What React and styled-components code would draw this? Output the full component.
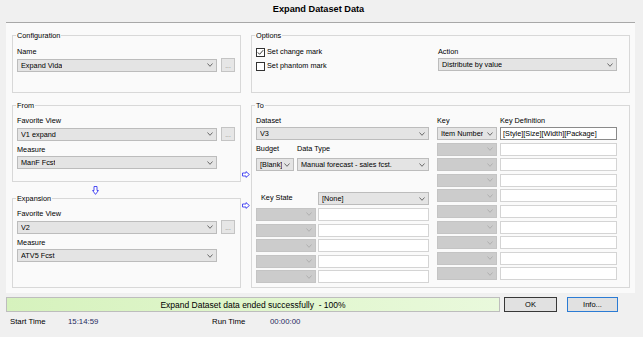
import React from 'react';
import styled, { createGlobalStyle } from 'styled-components';

const GlobalStyle = createGlobalStyle`
  html, body { margin: 0; padding: 0; background: #f0f0f0; }
  body { font-family: "Liberation Sans", Arial, sans-serif; color: #000; }
  * { box-sizing: border-box; }
`;

const Window = styled.div`
  width: 643px;
  height: 337px;
  background: #f0f0f0;
  overflow: hidden;
  font-size: 7.3px;
`;

const TitleBar = styled.div`
  height: 22px;
  padding: 0 6px 4px 0;
  display: flex;
  align-items: center;
  justify-content: center;
  font-weight: bold;
  font-size: 9.2px;
`;

const Panel = styled.div`
  margin-left: 6px;
  width: 629px;
  height: 271px;
  border-top: 1px solid #a8a8a8;
  background: #fafafa;
  padding: 12px 5px 0 6px;
  display: flex;
  flex-direction: column;
  gap: 12px;
`;

const Row = styled.div`
  display: grid;
  grid-template-columns: 229px 10px 379px;
  align-items: start;
`;

const Group = styled.div`
  position: relative;
  border: 1px solid #d8d8d8;
  height: ${p => p.$h}px;
  padding: ${p => p.$pt}px 4px 0 4px;
`;

const Legend = styled.span`
  position: absolute;
  top: -5px;
  left: 3px;
  padding: 0 1px;
  background: #fafafa;
  line-height: 9px;
  white-space: nowrap;
`;

const Label = styled.div`
  height: 9px;
  line-height: 9px;
  white-space: nowrap;
  margin-bottom: 2px;
  padding-left: ${p => p.$pl || 0}px;
`;

const Stack = styled.div`
  display: flex;
  flex-direction: column;
  gap: ${p => p.$gap || 0}px;
  margin-top: ${p => p.$mt || 0}px;
`;

const Inline = styled.div`
  display: flex;
  align-items: center;
  gap: ${p => p.$gap || 0}px;
`;

const ComboBox = styled.div`
  display: flex;
  align-items: center;
  justify-content: space-between;
  flex: none;
  width: ${p => p.$w}px;
  height: 13px;
  padding: 0 3px;
  border: 1px solid ${p => (p.$disabled ? '#c4c4c4' : '#bcbcbc')};
  background: ${p => (p.$disabled ? '#cccccc' : '#e4e4e4')};
  line-height: 11px;
  white-space: nowrap;
  overflow: hidden;
`;

const ComboText = styled.span`
  overflow: hidden;
`;

const ChevronSvg = styled.svg`
  flex: none;
  width: 6px;
  height: 4px;
  margin-left: 2px;
`;

function Combo({ w, value, disabled }) {
  return (
    <ComboBox $w={w} $disabled={disabled}>
      <ComboText>{value}</ComboText>
      <ChevronSvg viewBox="0 0 6 4">
        <polyline
          points="0.5,0.5 3,3.3 5.5,0.5"
          fill="none"
          stroke={disabled ? '#adadad' : '#5c5c5c'}
          strokeWidth="0.9"
        />
      </ChevronSvg>
    </ComboBox>
  );
}

const TextBox = styled.div`
  flex: none;
  width: ${p => p.$w}px;
  height: 13px;
  padding: 0 2px;
  background: #fff;
  border: 1px solid ${p => (p.$focused ? '#8a8a8a' : '#d4d4d4')};
  line-height: 11px;
  white-space: nowrap;
  overflow: hidden;
`;

const DotsButton = styled.div`
  flex: none;
  width: 14px;
  height: 14px;
  border: 1px solid #c4c4c4;
  background: #e6e6e6;
  color: #8a8a8a;
  font-size: 6.5px;
  line-height: 8px;
  display: flex;
  justify-content: center;
  align-items: flex-end;
  padding-bottom: 1px;
`;

const Split = styled.div`
  display: flex;
  align-items: flex-start;
`;

const OptionsLeft = styled.div`
  width: 182px;
  display: flex;
  flex-direction: column;
  gap: 4px;
`;

const CheckRow = styled.label`
  display: flex;
  align-items: center;
  gap: 2px;
  height: 10px;
  line-height: 10px;
  white-space: nowrap;
`;

const CheckBox = styled.span`
  display: flex;
  align-items: center;
  justify-content: center;
  width: 9px;
  height: 9px;
  border: 1px solid #333;
  background: #fff;
`;

function Check({ checked, children }) {
  return (
    <CheckRow>
      <CheckBox>
        {checked && (
          <svg width="7" height="7" viewBox="0 0 7 7">
            <polyline points="0.8,3.4 2.6,5.3 6.2,1.2" fill="none" stroke="#222" strokeWidth="0.9" />
          </svg>
        )}
      </CheckBox>
      {children}
    </CheckRow>
  );
}

const DownArrowRow = styled.div`
  height: 16px;
  padding-left: 80px;
  display: flex;
  align-items: center;
`;

const ArrowColumn = styled.div`
  display: flex;
  flex-direction: column;
  gap: 24px;
  padding: 66px 0 0 1px;
`;

const RightArrow = () => (
  <svg width="8" height="7" viewBox="0 0 8 7">
    <polygon
      points="0.5,2 4,2 4,0.6 7.4,3.5 4,6.4 4,5 0.5,5"
      fill="#fff"
      stroke="#3a3af0"
      strokeWidth="0.9"
    />
  </svg>
);

const DownArrow = () => (
  <svg width="7" height="9" viewBox="0 0 7 9">
    <polygon
      points="2,0.5 5,0.5 5,4.5 6.4,4.5 3.5,8.4 0.6,4.5 2,4.5"
      fill="#fff"
      stroke="#3a3af0"
      strokeWidth="0.9"
    />
  </svg>
);

const ToBody = styled.div`
  display: flex;
  gap: 8px;
`;

const SubColumn = styled.div`
  width: ${p => p.$w}px;
  display: flex;
  flex-direction: column;
`;

const PairRow = styled.div`
  display: grid;
  grid-template-columns: ${p => p.$cols};
  gap: ${p => p.$gap}px;
  align-items: center;
`;

const Footer = styled.div`
  display: flex;
  align-items: center;
  height: 15px;
  margin-top: 4px;
  padding-left: 6px;
`;

const Progress = styled.div`
  width: 494px;
  height: 15px;
  border: 1px solid #bdbdbd;
  background: linear-gradient(90deg, #d6f2bd 0%, #e0f6cc 50%, #e9f9dc 100%);
  display: flex;
  align-items: center;
  justify-content: center;
  font-size: 8.5px;
  white-space: pre;
`;

const DialogButton = styled.div`
  width: ${p => p.$w}px;
  height: 15px;
  margin-left: ${p => p.$ml}px;
  border: 1px solid ${p => p.$border};
  background: #e1e1e1;
  display: flex;
  align-items: center;
  justify-content: center;
  font-size: 7.5px;
`;

const TimeRow = styled.div`
  display: grid;
  grid-template-columns: 58px 144px 58px auto;
  margin-top: 5px;
  padding-left: 10px;
  font-size: 7.8px;
  line-height: 10px;
`;

const TimeValue = styled.span`
  color: #1f2b5e;
`;

export default function App() {
  const keyRows = Array.from({ length: 9 });
  const stateRows = Array.from({ length: 5 });
  return (
    <Window>
      <GlobalStyle />
      <TitleBar>Expand Dataset Data</TitleBar>
      <Panel>
        <Row>
          <Group $h={58} $pt={11}>
            <Legend>Configuration</Legend>
            <Label>Name</Label>
            <Inline $gap={4}>
              <Combo w={200} value="Expand Vida" />
              <DotsButton>...</DotsButton>
            </Inline>
          </Group>
          <div />
          <Group $h={58} $pt={11}>
            <Legend>Options</Legend>
            <Split>
              <OptionsLeft>
                <Check checked>Set change mark</Check>
                <Check>Set phantom mark</Check>
              </OptionsLeft>
              <div>
                <Label>Action</Label>
                <Combo w={179} value="Distribute by value" />
              </div>
            </Split>
          </Group>
        </Row>
        <Row>
          <Stack>
            <Group $h={77} $pt={10}>
              <Legend>From</Legend>
              <Label>Favorite View</Label>
              <Inline $gap={4}>
                <Combo w={200} value="V1 expand" />
                <DotsButton>...</DotsButton>
              </Inline>
              <Stack $mt={4}>
                <Label>Measure</Label>
                <Combo w={200} value="ManF Fcst" />
              </Stack>
            </Group>
            <DownArrowRow>
              <DownArrow />
            </DownArrowRow>
            <Group $h={90} $pt={10}>
              <Legend>Expansion</Legend>
              <Label>Favorite View</Label>
              <Inline $gap={4}>
                <Combo w={200} value="V2" />
                <DotsButton>...</DotsButton>
              </Inline>
              <Stack $mt={4}>
                <Label>Measure</Label>
                <Combo w={200} value="ATV5 Fcst" />
              </Stack>
            </Group>
          </Stack>
          <ArrowColumn>
            <RightArrow />
            <RightArrow />
          </ArrowColumn>
          <Group $h={183} $pt={10}>
            <Legend>To</Legend>
            <ToBody>
              <SubColumn $w={173}>
                <Label>Dataset</Label>
                <Combo w={173} value="V3" />
                <Stack $mt={4}>
                  <PairRow $cols="38px 132px" $gap={3}>
                    <Label>Budget</Label>
                    <Label>Data Type</Label>
                    <Combo w={38} value="[Blank]" />
                    <Combo w={132} value="Manual forecast - sales fcst." />
                  </PairRow>
                </Stack>
                <Stack $mt={21.4} $gap={2.6}>
                  <PairRow $cols="60px 111px" $gap={2}>
                    <Label $pl={5}>Key State</Label>
                    <Combo w={111} value="[None]" />
                  </PairRow>
                  {stateRows.map((_, i) => (
                    <PairRow key={i} $cols="60px 111px" $gap={2}>
                      <Combo w={60} disabled value="" />
                      <TextBox $w={111} />
                    </PairRow>
                  ))}
                </Stack>
              </SubColumn>
              <SubColumn $w={180}>
                <PairRow $cols="60px 117px" $gap={3}>
                  <Label>Key</Label>
                  <Label>Key Definition</Label>
                </PairRow>
                <Stack $gap={2.6}>
                  <PairRow $cols="60px 117px" $gap={3}>
                    <Combo w={60} value="Item Number" />
                    <TextBox $w={117} $focused>[Style][Size][Width][Package]</TextBox>
                  </PairRow>
                  {keyRows.map((_, i) => (
                    <PairRow key={i} $cols="60px 117px" $gap={3}>
                      <Combo w={60} disabled value="" />
                      <TextBox $w={117} />
                    </PairRow>
                  ))}
                </Stack>
              </SubColumn>
            </ToBody>
          </Group>
        </Row>
      </Panel>
      <Footer>
        <Progress>{'Expand Dataset data ended successfully  - 100%'}</Progress>
        <DialogButton $w={53} $ml={4} $border="#383838">OK</DialogButton>
        <DialogButton $w={51} $ml={10} $border="#2b7bd4">Info...</DialogButton>
      </Footer>
      <TimeRow>
        <span>Start Time</span>
        <TimeValue>15:14:59</TimeValue>
        <span>Run Time</span>
        <TimeValue>00:00:00</TimeValue>
      </TimeRow>
    </Window>
  );
}
